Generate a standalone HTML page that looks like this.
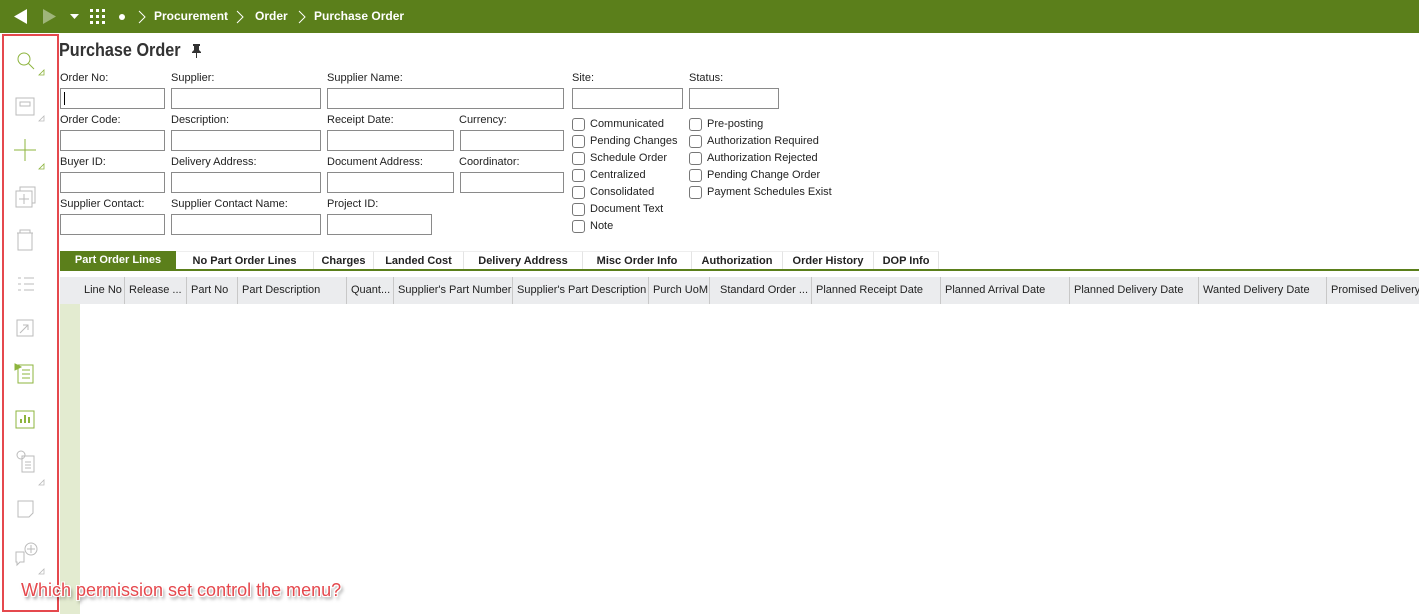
<!DOCTYPE html>
<html><head><meta charset="utf-8"><style>
*{margin:0;padding:0;box-sizing:border-box}
body{width:1419px;height:614px;overflow:hidden;background:#fff;font-family:"Liberation Sans",sans-serif;font-size:11px;color:#222;position:relative}
.a{position:absolute}
.top{left:0;top:0;width:1419px;height:33px;background:#5b7f1b;color:#fff}
.lbl{position:absolute;font-size:11px;color:#222}
.in{position:absolute;height:21px;border:1px solid #8a8a8a;background:#fff}
.cb{position:absolute;font-size:11px;color:#222;padding-left:18px;line-height:13px}
.cb:before{content:"";position:absolute;left:0;top:0;width:11px;height:11px;border:1px solid #777;border-radius:3px;background:#fff}
.tab{position:absolute;top:251px;height:19px;line-height:18px;font-weight:bold;font-size:11px;text-align:center;border-right:1px solid #e4e4e4;border-top:1px solid #eee}
.th{position:absolute;top:277px;height:27px;line-height:27px;font-size:11px;padding-left:4px;border-left:1px solid #c8c8c8;white-space:nowrap;overflow:hidden}
</style></head><body>
<div class="a top">
<svg class="a" style="left:14px;top:9px" width="14" height="15"><path d="M13 0V15L0 7.5Z" fill="#fff"/></svg>
<svg class="a" style="left:43px;top:9px" width="14" height="15"><path d="M0 0V15L13 7.5Z" fill="#9fb57a"/></svg>
<svg class="a" style="left:70px;top:14px" width="9" height="5"><path d="M0 0H9L4.5 5Z" fill="#fff"/></svg>
<svg class="a" style="left:90px;top:9px" width="16" height="16" fill="#fff"><rect x="0" y="0" width="3" height="3"/><rect x="6" y="0" width="3" height="3"/><rect x="12" y="0" width="3" height="3"/><rect x="0" y="6" width="3" height="3"/><rect x="6" y="6" width="3" height="3"/><rect x="12" y="6" width="3" height="3"/><rect x="0" y="12" width="3" height="3"/><rect x="6" y="12" width="3" height="3"/><rect x="12" y="12" width="3" height="3"/></svg>
<div class="a" style="left:119px;top:14px;width:6px;height:6px;border-radius:50%;background:#fff"></div>
<svg class="a" style="left:138px;top:10px" width="8" height="14"><path d="M1 1L7 7L1 13" stroke="#fff" fill="none"/></svg>
<div class="a" style="left:154px;top:9px;font-size:12px;font-weight:bold">Procurement</div>
<svg class="a" style="left:236px;top:10px" width="8" height="14"><path d="M1 1L7 7L1 13" stroke="#fff" fill="none"/></svg>
<div class="a" style="left:255px;top:9px;font-size:12px;font-weight:bold">Order</div>
<svg class="a" style="left:298px;top:10px" width="8" height="14"><path d="M1 1L7 7L1 13" stroke="#fff" fill="none"/></svg>
<div class="a" style="left:314px;top:9px;font-size:12px;font-weight:bold">Purchase Order</div>
</div>

<div class="a" style="left:0;top:33px;width:59px;height:581px;background:#fff"></div>
<svg class="a" style="left:0;top:33px" width="60" height="581" fill="none" stroke-width="1">
<g stroke="#8db43d"><circle cx="24" cy="26" r="6"/><path d="M28.5 30.5L34 36"/><path d="M39 42L44 42L44 37Z" stroke-width="0.8"/></g>
<g stroke="#bbb"><rect x="16" y="65" width="18" height="17"/><rect x="20" y="69" width="10" height="4"/><path d="M39 88L44 88L44 83Z" stroke-width="0.8"/></g>
<g stroke="#8db43d"><path d="M25 106V128M14 117H36"/><path d="M39 136L44 136L44 131Z" stroke-width="0.8"/></g>
<g stroke="#bbb"><rect x="16" y="158" width="16" height="16"/><path d="M20 158V154H35V170H32"/><path d="M24 161V171M19 166H29"/></g>
<g stroke="#bbb"><rect x="18" y="200" width="14" height="17"/><path d="M17 200H33M20 200V197H30V200"/></g>
<g stroke="#bbb"><path d="M18 245H21M24 245H34M18 251H21M24 251H34M18 257H21M24 257H34"/></g>
<g stroke="#bbb"><rect x="17" y="287" width="16" height="16"/><path d="M20 300L28 292M23 292H28V297"/></g>
<g stroke="#8db43d"><rect x="18" y="332" width="15" height="18"/><path d="M22 337H30M22 341H30M22 345H30"/><path d="M15 331L21 334L15 337Z" fill="#8db43d"/></g>
<g stroke="#8db43d"><rect x="16" y="378" width="18" height="17"/><path d="M21 390V386M25 390V382M29 390V384" stroke-width="2"/></g>
<g stroke="#bbb"><circle cx="21" cy="422" r="4"/><rect x="22" y="423" width="12" height="16"/><path d="M25 429H31M25 432H31M25 435H31"/><path d="M39 452L44 452L44 447Z" stroke-width="0.8"/></g>
<g stroke="#bbb"><path d="M18 468H33V480L29 484H18Z"/></g>
<g stroke="#bbb"><circle cx="31" cy="516" r="6"/><path d="M31 512V520M27 516H35"/><path d="M16 519H24V529H20L17 532V529H16Z"/><path d="M39 541L44 541L44 536Z" stroke-width="0.8"/></g>
</svg>
<div class="a" style="left:2px;top:34px;width:57px;height:578px;border:2px solid #e5484d"></div>

<div class="a" style="left:59px;top:40px;font-size:18px;font-weight:bold;color:#333;transform:scaleX(0.9);transform-origin:0 0">Purchase Order</div>
<svg class="a" style="left:191px;top:44px" width="11" height="14"><path d="M2 0H9V2H8V6L10 8V9H6V14H5V9H1V8L3 6V2H2Z" fill="#333"/></svg>

<div class="lbl" style="left:60px;top:72px">Order No:</div>
<div class="lbl" style="left:171px;top:72px">Supplier:</div>
<div class="lbl" style="left:327px;top:72px">Supplier Name:</div>
<div class="lbl" style="left:572px;top:72px">Site:</div>
<div class="lbl" style="left:689px;top:72px">Status:</div>
<div class="in" style="left:60px;top:88px;width:105px"><div class="a" style="left:3px;top:3px;width:1px;height:13px;background:#000"></div></div>
<div class="in" style="left:171px;top:88px;width:150px"></div>
<div class="in" style="left:327px;top:88px;width:237px"></div>
<div class="in" style="left:572px;top:88px;width:111px"></div>
<div class="in" style="left:689px;top:88px;width:90px"></div>

<div class="lbl" style="left:60px;top:114px">Order Code:</div>
<div class="lbl" style="left:171px;top:114px">Description:</div>
<div class="lbl" style="left:327px;top:114px">Receipt Date:</div>
<div class="lbl" style="left:459px;top:114px">Currency:</div>
<div class="in" style="left:60px;top:130px;width:105px"></div>
<div class="in" style="left:171px;top:130px;width:150px"></div>
<div class="in" style="left:327px;top:130px;width:127px"></div>
<div class="in" style="left:460px;top:130px;width:104px"></div>

<div class="lbl" style="left:60px;top:156px">Buyer ID:</div>
<div class="lbl" style="left:171px;top:156px">Delivery Address:</div>
<div class="lbl" style="left:327px;top:156px">Document Address:</div>
<div class="lbl" style="left:459px;top:156px">Coordinator:</div>
<div class="in" style="left:60px;top:172px;width:105px"></div>
<div class="in" style="left:171px;top:172px;width:150px"></div>
<div class="in" style="left:327px;top:172px;width:127px"></div>
<div class="in" style="left:460px;top:172px;width:104px"></div>

<div class="lbl" style="left:60px;top:198px">Supplier Contact:</div>
<div class="lbl" style="left:171px;top:198px">Supplier Contact Name:</div>
<div class="lbl" style="left:327px;top:198px">Project ID:</div>
<div class="in" style="left:60px;top:214px;width:105px"></div>
<div class="in" style="left:171px;top:214px;width:150px"></div>
<div class="in" style="left:327px;top:214px;width:105px"></div>

<div class="cb" style="left:572px;top:118px">Communicated</div>
<div class="cb" style="left:572px;top:135px">Pending Changes</div>
<div class="cb" style="left:572px;top:152px">Schedule Order</div>
<div class="cb" style="left:572px;top:169px">Centralized</div>
<div class="cb" style="left:572px;top:186px">Consolidated</div>
<div class="cb" style="left:572px;top:203px">Document Text</div>
<div class="cb" style="left:572px;top:220px">Note</div>
<div class="cb" style="left:689px;top:118px">Pre-posting</div>
<div class="cb" style="left:689px;top:135px">Authorization Required</div>
<div class="cb" style="left:689px;top:152px">Authorization Rejected</div>
<div class="cb" style="left:689px;top:169px">Pending Change Order</div>
<div class="cb" style="left:689px;top:186px">Payment Schedules Exist</div>

<div class="tab" style="left:60px;width:116px;background:#5b7f1b;color:#fff;border:none;line-height:19px">Part Order Lines</div>
<div class="tab" style="left:176px;width:138px">No Part Order Lines</div>
<div class="tab" style="left:314px;width:60px">Charges</div>
<div class="tab" style="left:374px;width:90px">Landed Cost</div>
<div class="tab" style="left:464px;width:119px">Delivery Address</div>
<div class="tab" style="left:583px;width:109px">Misc Order Info</div>
<div class="tab" style="left:692px;width:91px">Authorization</div>
<div class="tab" style="left:783px;width:91px">Order History</div>
<div class="tab" style="left:874px;width:65px">DOP Info</div>
<div class="a" style="left:60px;top:269px;width:1359px;height:2px;background:#5b7f1b"></div>

<div class="a" style="left:60px;top:277px;width:1359px;height:27px;background:#ebecee"></div>
<div class="th" style="left:80px;width:44px;border-left:none">Line No</div>
<div class="th" style="left:124px;width:62px">Release ...</div>
<div class="th" style="left:186px;width:51px">Part No</div>
<div class="th" style="left:237px;width:109px">Part Description</div>
<div class="th" style="left:346px;width:47px">Quant...</div>
<div class="th" style="left:393px;width:119px">Supplier's Part Number</div>
<div class="th" style="left:512px;width:136px">Supplier's Part Description</div>
<div class="th" style="left:648px;width:61px">Purch UoM</div>
<div class="th" style="left:709px;width:102px;padding-left:10px">Standard Order ...</div>
<div class="th" style="left:811px;width:129px">Planned Receipt Date</div>
<div class="th" style="left:940px;width:129px">Planned Arrival Date</div>
<div class="th" style="left:1069px;width:129px">Planned Delivery Date</div>
<div class="th" style="left:1198px;width:128px">Wanted Delivery Date</div>
<div class="th" style="left:1326px;width:93px">Promised Delivery</div>
<div class="a" style="left:60px;top:304px;width:20px;height:310px;background:#e3ebd0"></div>

<div class="a" style="left:21px;top:580px;font-size:18px;color:#e5484d;text-shadow:1px 1px 0 #fff,-1px -1px 0 #fff,1px -1px 0 #fff,-1px 1px 0 #fff,2px 3px 3px rgba(0,0,0,0.5)">Which permission set control the menu?</div>
</body></html>
